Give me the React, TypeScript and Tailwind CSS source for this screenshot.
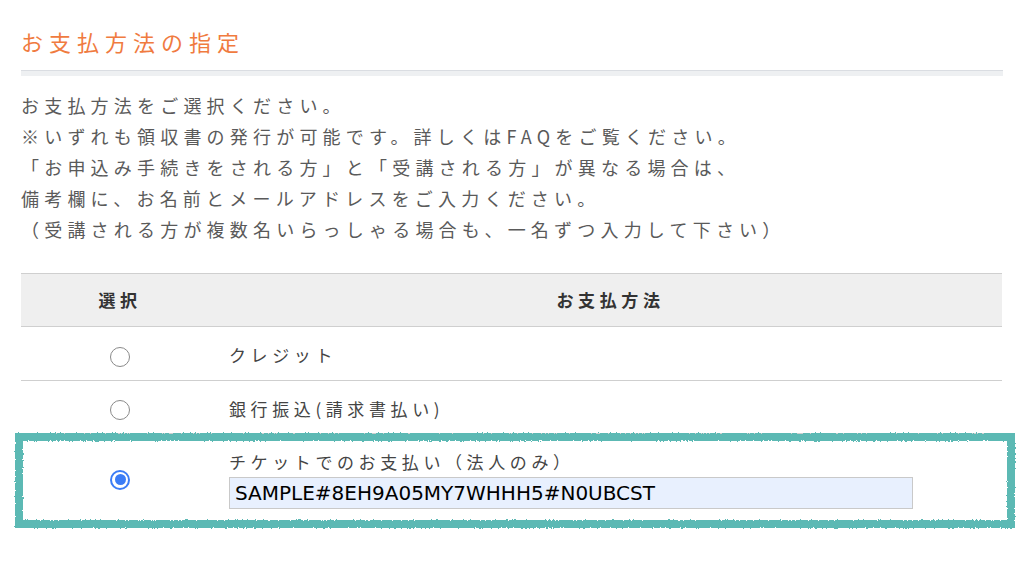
import React from "react";

const jp = "font-['Noto_Sans_CJK_JP','Noto_Sans',sans-serif]";

function Radio({ checked }: { checked?: boolean }) {
  if (checked) {
    return (
      <span className="flex h-[20px] w-[20px] items-center justify-center rounded-full border-[2px] border-[#3b7cf6] bg-white">
        <span className="h-[11px] w-[11px] rounded-full bg-[#3b7cf6]" />
      </span>
    );
  }
  return <span className="block h-[20px] w-[20px] rounded-full border-[1.5px] border-[#8a8a8a] bg-white" />;
}

export default function App() {
  const notes = [
    "お支払方法をご選択ください。",
    "※いずれも領収書の発行が可能です。詳しくはFAQをご覧ください。",
    "「お申込み手続きをされる方」と「受講される方」が異なる場合は、",
    "備考欄に、お名前とメールアドレスをご入力ください。",
    "（受講される方が複数名いらっしゃる場合も、一名ずつ入力して下さい）",
  ];

  return (
    <div className={`min-h-[569px] w-[1024px] bg-white ${jp}`}>
      {/* rough marker stroke for the highlight */}
      <svg className="absolute h-0 w-0">
        <filter id="rough">
          <feTurbulence type="fractalNoise" baseFrequency="0.6" numOctaves="2" seed="3" />
          <feDisplacementMap in="SourceGraphic" scale="3" />
        </filter>
      </svg>

      <div className="w-[1002px] pl-[21px] pt-[25px]">
        <h2 className="text-[22px] leading-[33px] tracking-[6px] text-[#f07b3f]">お支払方法の指定</h2>
        <div className="mt-[12px] h-[6px] w-[982px] border-t border-[#dadde2] bg-[#eef0f2]" />

        <div className="mt-[14px] text-[18px] leading-[31px] tracking-[5.2px] text-[#5a5a5a]">
          {notes.map((n) => (
            <p key={n}>{n}</p>
          ))}
        </div>

        <div className="mt-[28px] text-[17px] tracking-[4.6px]">
          <div className="grid h-[54px] grid-cols-[198px_1fr] border-y border-[#cfcfcf] bg-[#efefef] font-bold text-[#333]">
            <div className="flex items-center justify-center">選択</div>
            <div className="flex items-center justify-center">お支払方法</div>
          </div>

          <div className="grid h-[54px] grid-cols-[198px_1fr] border-b border-[#cfcfcf] text-[#444]">
            <div className="flex items-center justify-center pt-[6px]">
              <Radio />
            </div>
            <div className="flex items-center pl-[10px] pt-[3px]">クレジット</div>
          </div>

          <div className="grid h-[53px] grid-cols-[198px_1fr] border-b border-[#cfcfcf] text-[#444]">
            <div className="flex items-center justify-center pt-[6px]">
              <Radio />
            </div>
            <div className="flex items-center pl-[10px] pt-[3px]">銀行振込(請求書払い)</div>
          </div>

          <div className="relative grid grid-cols-[198px_1fr] text-[#444]">
            <div className="flex items-center justify-center pt-[2px]">
              <Radio checked />
            </div>
            <div className="pb-[14px] pl-[10px] pt-[12px]">
              <div className="leading-[31px]">チケットでのお支払い（法人のみ）</div>
              <div className="flex h-[32px] w-[684px] items-center border border-[#c9c9c9] bg-[#e8f0fe] pl-[5px] font-['DejaVu_Sans',sans-serif] text-[20px] tracking-normal text-black">
                SAMPLE#8EH9A05MY7WHHH5#N0UBCST
              </div>
            </div>
            <div className="pointer-events-none absolute bottom-[-5px] left-[-6px] right-[-13px] top-[-1px] border-[8px] border-[#5cb9b4] [filter:url(#rough)]" />
          </div>
        </div>
      </div>
    </div>
  );
}
